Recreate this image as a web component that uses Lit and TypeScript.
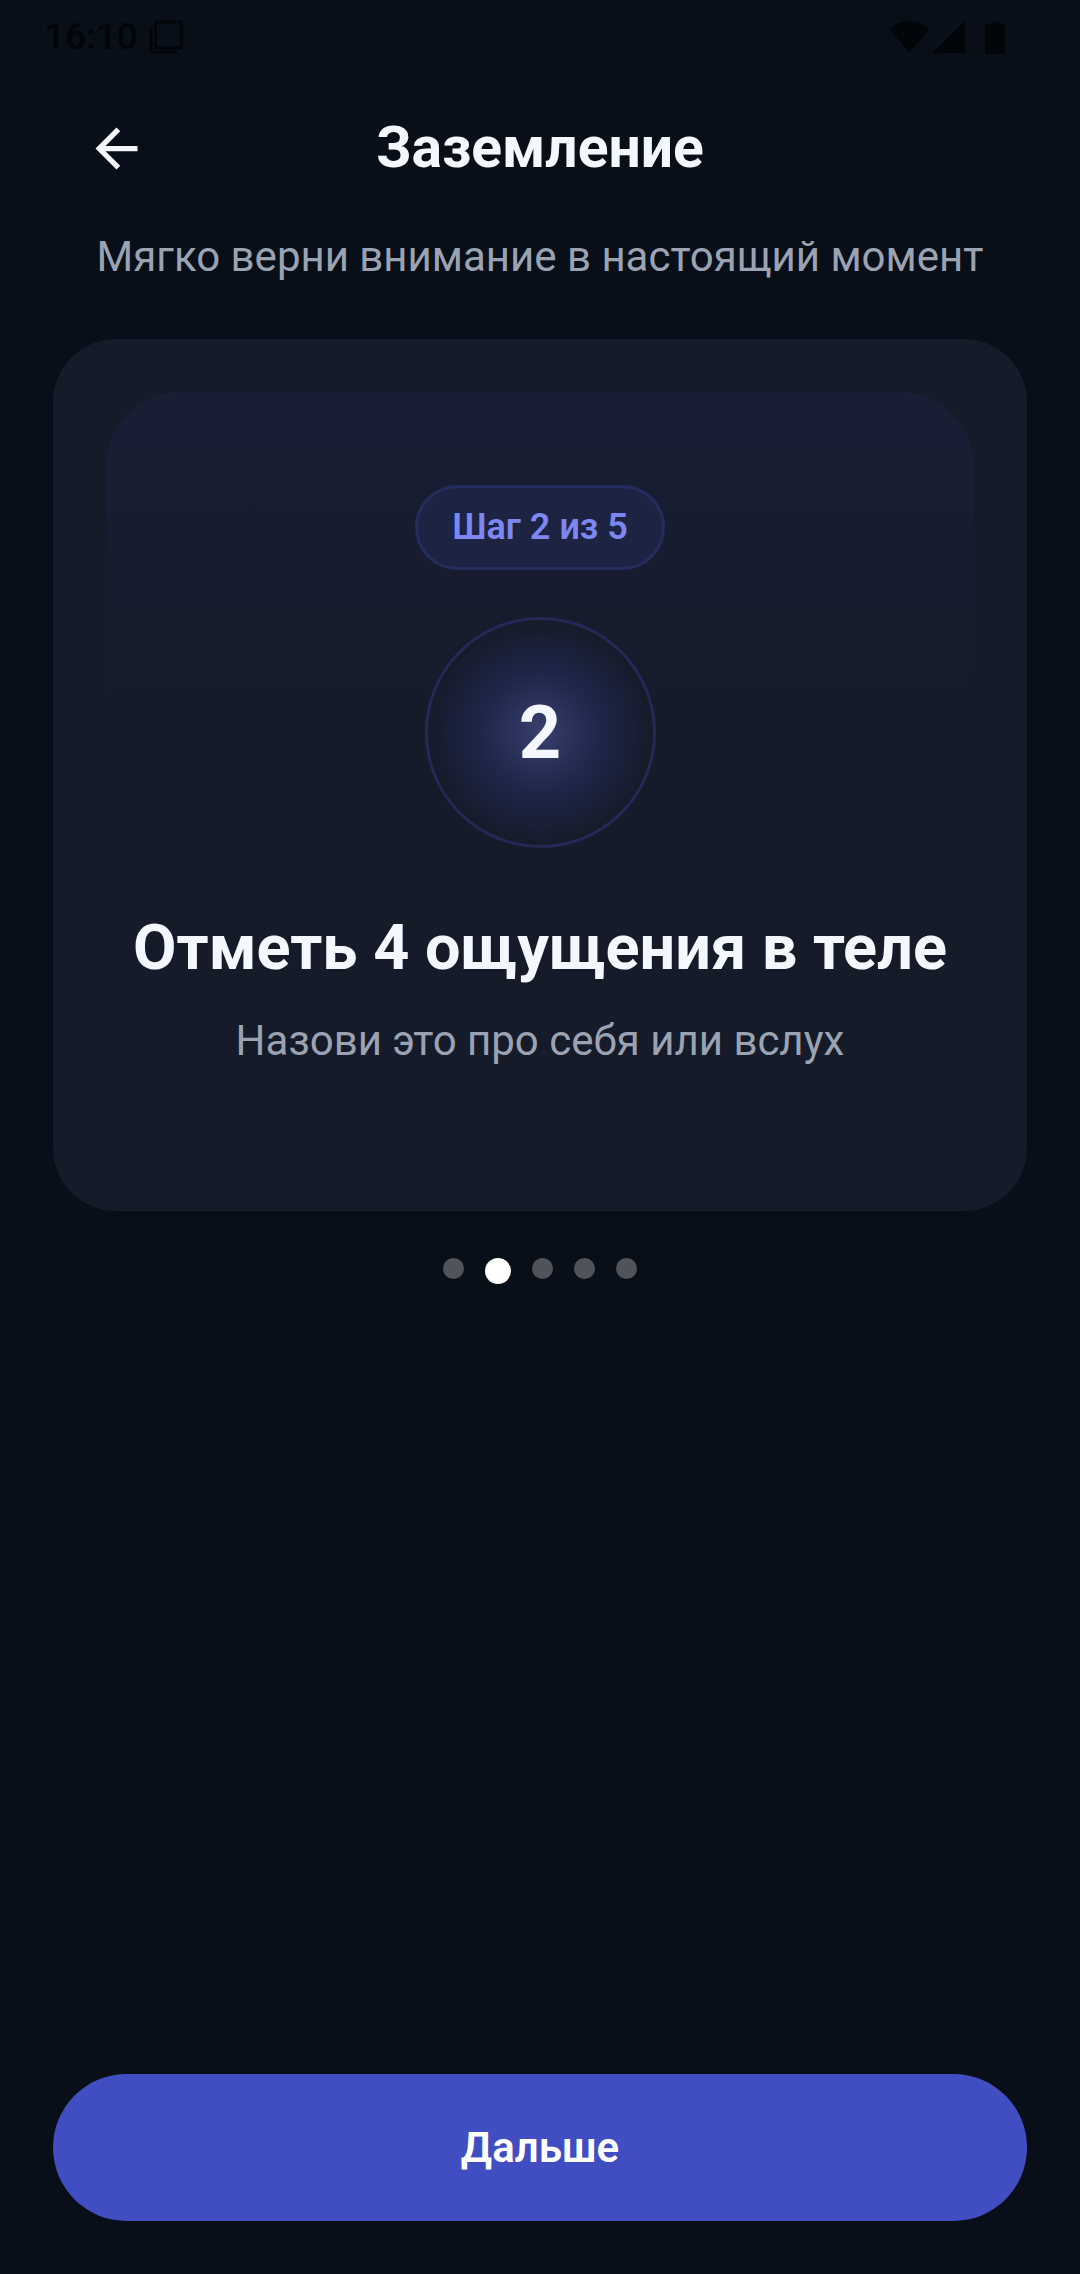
import { LitElement, html, css } from "lit";
import { customElement, property, state } from "lit/decorators.js";
import { classMap } from "lit/directives/class-map.js";

interface Step {
  title: string;
  hint: string;
}

const STEPS: Step[] = [
  { title: "Отметь 5 предметов вокруг", hint: "Назови это про себя или вслух" },
  { title: "Отметь 4 ощущения в теле", hint: "Назови это про себя или вслух" },
  { title: "Отметь 3 звука рядом", hint: "Назови это про себя или вслух" },
  { title: "Отметь 2 запаха", hint: "Назови это про себя или вслух" },
  { title: "Отметь 1 вкус", hint: "Назови это про себя или вслух" },
];

@customElement("status-bar")
export class StatusBar extends LitElement {
  static styles = css`
    :host {
      display: flex;
      align-items: center;
      justify-content: space-between;
      height: 64px;
      padding: 10px 75px 0 44px;
      box-sizing: border-box;
      color: #020509;
    }
    .group {
      display: flex;
      align-items: center;
      gap: 11px;
    }
    .time {
      font-size: 37px;
      line-height: 44px;
      font-weight: 500;
    }
    .icon {
      display: block;
      fill: currentColor;
    }
    .stack {
      fill: none;
      stroke: currentColor;
      stroke-width: 3;
    }
  `;

  render() {
    return html`
      <div class="group">
        <span class="time">16:10</span>
        <svg class="icon stack" width="34" height="34" viewBox="0 0 34 34" aria-hidden="true">
          <rect x="6.500" y="2" width="26" height="26" rx="2"></rect>
          <path d="M2 7V30a2 2 0 0 0 2 2H28"></path>
        </svg>
      </div>
      <svg class="icon" width="116" height="36" viewBox="0 0 116 36" aria-hidden="true">
        <path d="M1 10.500C12 -1 29 -1 40 10.500L20.500 34Z"></path>
        <path d="M76 1.500V34H43.500Z"></path>
        <path d="M102 2h8v3h4a2 2 0 0 1 2 2v26a2 2 0 0 1-2 2h-16a2 2 0 0 1-2-2V7a2 2 0 0 1 2-2h4z"></path>
      </svg>
    `;
  }
}

@customElement("step-card")
export class StepCard extends LitElement {
  @property({ type: Number }) index = 0;

  static styles = css`
    :host {
      display: block;
      padding: 53px;
      border-radius: 63px;
      background: #151b28;
    }
    .panel {
      display: flex;
      flex-direction: column;
      align-items: center;
      padding: 93px 16px 88px;
      border-radius: 74px;
      background: linear-gradient(180deg, rgba(84, 80, 255, 0.06), rgba(84, 80, 255, 0) 50%);
      text-align: center;
    }
    .badge {
      padding: 17px 34px;
      border: 3px solid #252d5e;
      border-radius: 43px;
      background: #1d2443;
      color: #7c87f2;
      font-size: 36px;
      line-height: 45px;
      font-weight: 600;
    }
    .orb {
      display: flex;
      align-items: center;
      justify-content: center;
      box-sizing: border-box;
      width: 231px;
      height: 231px;
      margin-top: 47px;
      border: 3px solid #222955;
      border-radius: 50%;
      background: radial-gradient(circle closest-side, #383f6d, #1e264a 52%, #161b29 100%);
      color: #f5f7ff;
      font-size: 74px;
      font-weight: 700;
    }
    .title {
      margin: 57px 0 0;
      color: #f5f7ff;
      font-size: 63px;
      line-height: 86px;
      font-weight: 700;
    }
    .hint {
      margin: 21px 0 0;
      color: #9ba3b3;
      font-size: 42px;
      line-height: 58px;
    }
  `;

  render() {
    const step = STEPS[this.index];
    return html`
      <div class="panel">
        <span class="badge">Шаг ${this.index + 1} из ${STEPS.length}</span>
        <div class="orb">${this.index + 1}</div>
        <h2 class="title">${step.title}</h2>
        <p class="hint">${step.hint}</p>
      </div>
    `;
  }
}

@customElement("step-dots")
export class StepDots extends LitElement {
  @property({ type: Number }) index = 0;
  @property({ type: Number }) count = 0;

  static styles = css`
    :host {
      display: flex;
      align-items: flex-start;
      justify-content: center;
      gap: 21px;
    }
    .dot {
      width: 21px;
      height: 21px;
      border-radius: 50%;
      background: #50545a;
    }
    .active {
      width: 26px;
      height: 26px;
      background: #ffffff;
    }
  `;

  render() {
    return Array.from(
      { length: this.count },
      (_, i) => html`<span class=${classMap({ dot: true, active: i === this.index })}></span>`
    );
  }
}

@customElement("app-root")
export class AppRoot extends LitElement {
  @state() private index = 1;

  static styles = css`
    :host {
      display: flex;
      flex-direction: column;
      min-height: 100vh;
      box-sizing: border-box;
      padding-bottom: 53px;
      background: #080f18;
      font-family: Roboto, "Noto Sans", sans-serif;
    }
    .header {
      display: grid;
      grid-template-columns: 63px 1fr 63px;
      align-items: center;
      height: 168px;
      padding: 0 85px;
    }
    .back {
      padding: 0;
      border: 0;
      background: none;
      color: #f5f7ff;
      cursor: pointer;
    }
    .arrow {
      display: block;
      width: 63px;
      height: 63px;
      fill: currentColor;
    }
    .heading {
      margin: 0;
      color: #f5f7ff;
      font-size: 57px;
      line-height: 68px;
      font-weight: 700;
      text-align: center;
    }
    .lead {
      margin: 0 53px;
      color: #9ba3b3;
      font-size: 42px;
      line-height: 50px;
      text-align: center;
    }
    .card {
      margin: 57px 53px 47px;
    }
    .next {
      height: 147px;
      margin: auto 53px 0;
      border: 0;
      border-radius: 74px;
      background: #414ec1;
      color: #ffffff;
      font-family: inherit;
      font-size: 42px;
      font-weight: 600;
      cursor: pointer;
    }
  `;

  private back() {
    this.index = Math.max(0, this.index - 1);
  }

  private next() {
    this.index = Math.min(STEPS.length - 1, this.index + 1);
  }

  render() {
    return html`
      <status-bar></status-bar>
      <header class="header">
        <button class="back" aria-label="Назад" @click=${this.back}>
          <svg class="arrow" viewBox="0 0 24 24" aria-hidden="true">
            <path d="M20 11H7.830l5.590-5.590L12 4l-8 8 8 8 1.410-1.410L7.830 13H20z"></path>
          </svg>
        </button>
        <h1 class="heading">Заземление</h1>
      </header>
      <p class="lead">Мягко верни внимание в настоящий момент</p>
      <step-card class="card" .index=${this.index}></step-card>
      <step-dots .index=${this.index} .count=${STEPS.length}></step-dots>
      <button class="next" @click=${this.next}>Дальше</button>
    `;
  }
}
